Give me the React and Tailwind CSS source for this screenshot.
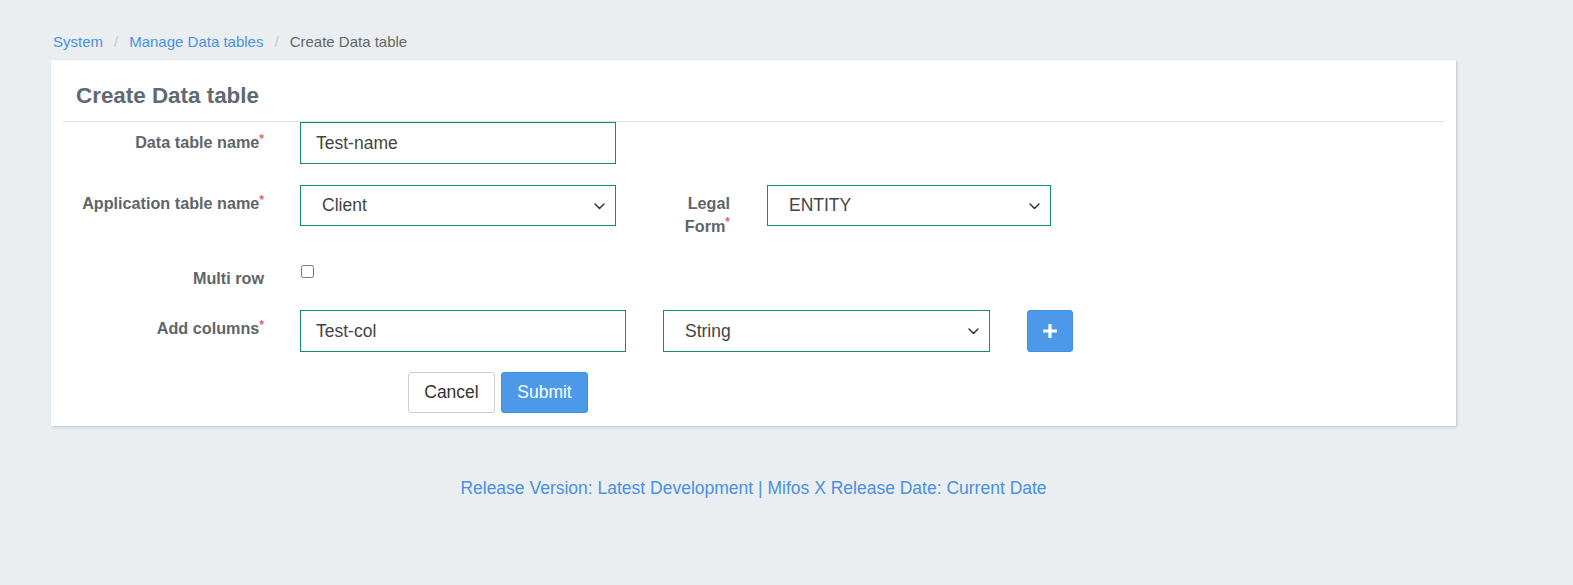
import React from "react";

const Chevron = () => (
  <svg className="pointer-events-none absolute right-[10px] top-1/2 -translate-y-1/2" width="13" height="13" viewBox="0 0 16 16" fill="none">
    <path d="M2.5 5.5L8 11l5.5-5.5" stroke="#333" strokeWidth="1.8" strokeLinecap="round" strokeLinejoin="round" />
  </svg>
);

const Req = () => <span className="text-[#e4606d] text-[12px] align-top leading-none relative top-[1px]">*</span>;

const Select = ({ value, className }) => (
  <div className={"relative " + className}>
    <select
      defaultValue={value}
      className="h-full w-full appearance-none border border-[#138a72] bg-white pl-[21px] text-[17.5px] text-[#444] outline-none"
    >
      <option>{value}</option>
    </select>
    <Chevron />
  </div>
);

export default function App() {
  return (
    <div className="min-h-[585px] bg-[#eaeef1] font-['Liberation_Sans',Arial,sans-serif]">
      <div className="pl-[51px] pt-[32px]">
        <div className="pl-[2px] text-[15px] leading-[20px] flex items-center">
          <span className="text-[#4a90e2]">System</span>
          <span className="mx-[11px] text-[#c5c9cc]">/</span>
          <span className="text-[#4a90e2]">Manage Data tables</span>
          <span className="mx-[11px] text-[#c5c9cc]">/</span>
          <span className="text-[#666]">Create Data table</span>
        </div>

        <div className="mt-[8px] w-[1405px] bg-white shadow-[1px_1px_3px_rgba(0,0,0,0.18)] pb-[13px]">
          <h2 className="pt-[23px] pl-[25px] text-[22.4px] leading-[26px] font-bold text-[#606a70]">Create Data table</h2>
          <div className="mt-[12px] mx-[12px] border-t border-[#e2e2e2]" />

          <div className="text-[16.2px] font-bold text-[#5f6569]">
            {/* Row 1 */}
            <div className="flex items-start">
              <div className="w-[213px] text-right pt-[10px] leading-[20px]">Data table name<Req /></div>
              <input
                defaultValue="Test-name"
                className="ml-[36px] w-[316px] h-[42px] border border-[#138a72] pl-[15px] text-[17.5px] font-normal text-[#444] outline-none"
              />
            </div>

            {/* Row 2 */}
            <div className="mt-[21px] flex items-start">
              <div className="w-[213px] text-right pt-[8px] leading-[20px]">Application table name<Req /></div>
              <Select value="Client" className="ml-[36px] w-[316px] h-[41px] font-normal" />
              <div className="ml-[54px] w-[60px] text-right pt-[7px] leading-[23px]">Legal Form<Req /></div>
              <Select value="ENTITY" className="ml-[37px] w-[284px] h-[41px] font-normal" />
            </div>

            {/* Row 3 */}
            <div className="mt-[27px] flex items-start">
              <div className="w-[213px] text-right pt-[3px] leading-[20px]">Multi row</div>
              <input type="checkbox" className="ml-[37px] mt-0 w-[13px] h-[13px]" />
            </div>

            {/* Row 4 */}
            <div className="mt-[22px] flex items-start">
              <div className="w-[213px] text-right pt-[8px] leading-[20px]">Add columns<Req /></div>
              <input
                defaultValue="Test-col"
                className="ml-[36px] w-[326px] h-[42px] border border-[#138a72] pl-[15px] text-[17.5px] font-normal text-[#444] outline-none"
              />
              <Select value="String" className="ml-[37px] w-[327px] h-[42px] font-normal" />
              <button className="ml-[37px] w-[46px] h-[42px] rounded-[3px] bg-[#4c99e9] border border-[#4390e0] flex items-center justify-center">
                <svg width="14" height="14" viewBox="0 0 14 14">
                  <path d="M5.4 0h3.2v5.4H14v3.2H8.6V14H5.4V8.6H0V5.4h5.4z" fill="#fff" />
                </svg>
              </button>
            </div>

            {/* Row 5 */}
            <div className="mt-[20px] flex items-start pl-[357px] font-normal">
              <button className="w-[87px] h-[41px] rounded-[3px] border border-[#ccc] bg-white text-[17.5px] text-[#333]">Cancel</button>
              <button className="ml-[6px] w-[87px] h-[41px] rounded-[3px] border border-[#4390e0] bg-[#4c99e9] text-[17.5px] text-white">Submit</button>
            </div>
          </div>
        </div>

        <div className="w-[1405px] mt-[52px] text-center text-[17.5px] leading-[20px] text-[#4a90e2]">
          Release Version: Latest Development | Mifos X Release Date: Current Date
        </div>
      </div>
    </div>
  );
}
